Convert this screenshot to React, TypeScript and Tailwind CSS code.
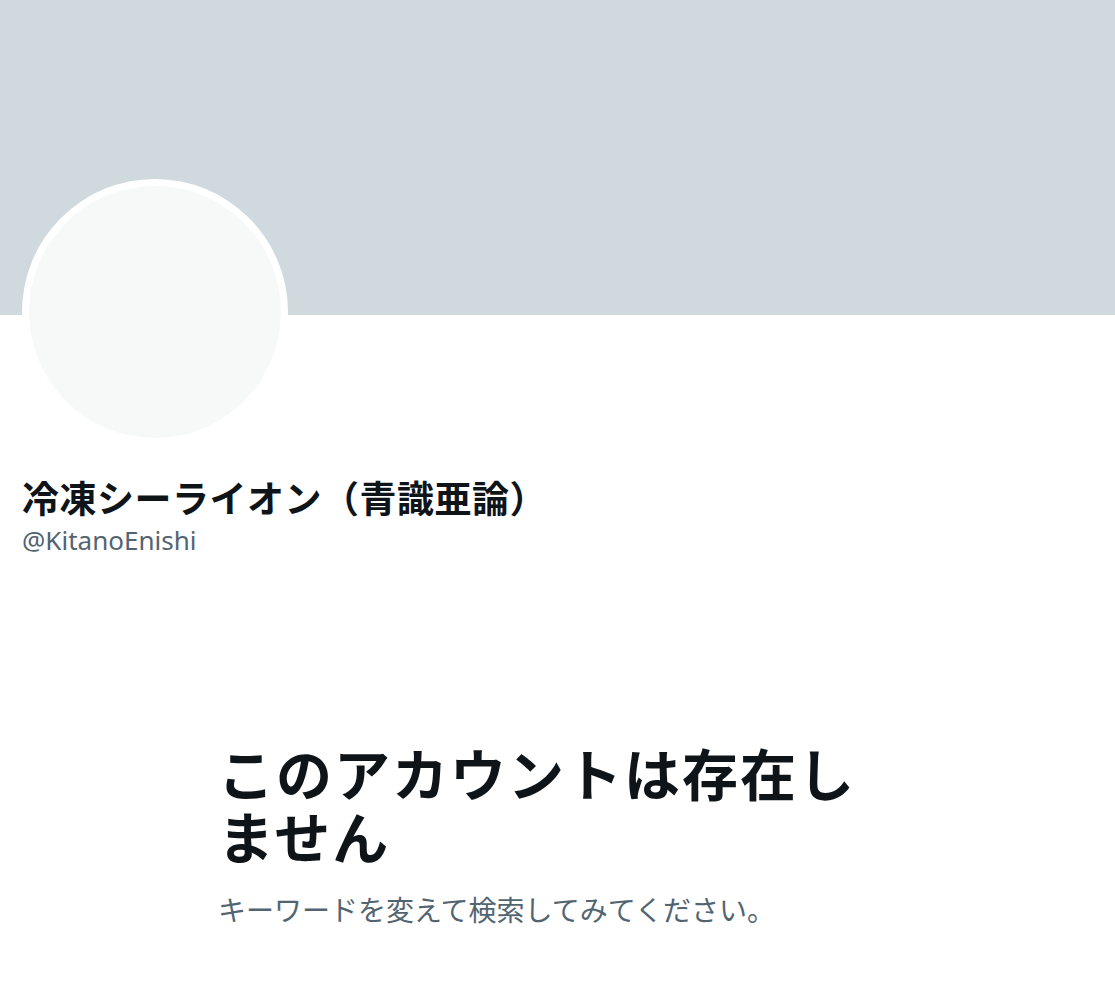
export default function App() {
  return (
    <div className="min-h-screen w-full bg-white">
      <div className="h-[315px] w-full bg-[#cfd9de]" />

      <div className="px-[22px]">
        <div className="-mt-[136px] h-[266px] w-[266px] rounded-full bg-white p-[7px]">
          <div className="h-full w-full rounded-full bg-[#f7f9f9]" />
        </div>

        <div className="mt-[33px] flex flex-col gap-[3px] font-['Noto_Sans','Noto_Sans_CJK_JP',sans-serif]">
          <h1 className="text-[37px] font-bold leading-[42px] tracking-[0.5px] text-[#0f1419]">
            冷凍シーライオン（青識亜論）
          </h1>
          <p className="text-[26px] leading-[34px] text-[#536471]">@KitanoEnishi</p>
        </div>
      </div>

      <div className="mx-auto mt-[186px] w-[679px] font-['Noto_Sans','Noto_Sans_CJK_JP',sans-serif]">
        <h2 className="text-[56px] font-bold leading-[63px] tracking-[2px] text-[#0f1419]">
          このアカウントは存在しません
        </h2>
        <p className="mt-[23px] text-[28px] leading-[36px] text-[#536471]">
          キーワードを変えて検索してみてください。
        </p>
      </div>
    </div>
  );
}
